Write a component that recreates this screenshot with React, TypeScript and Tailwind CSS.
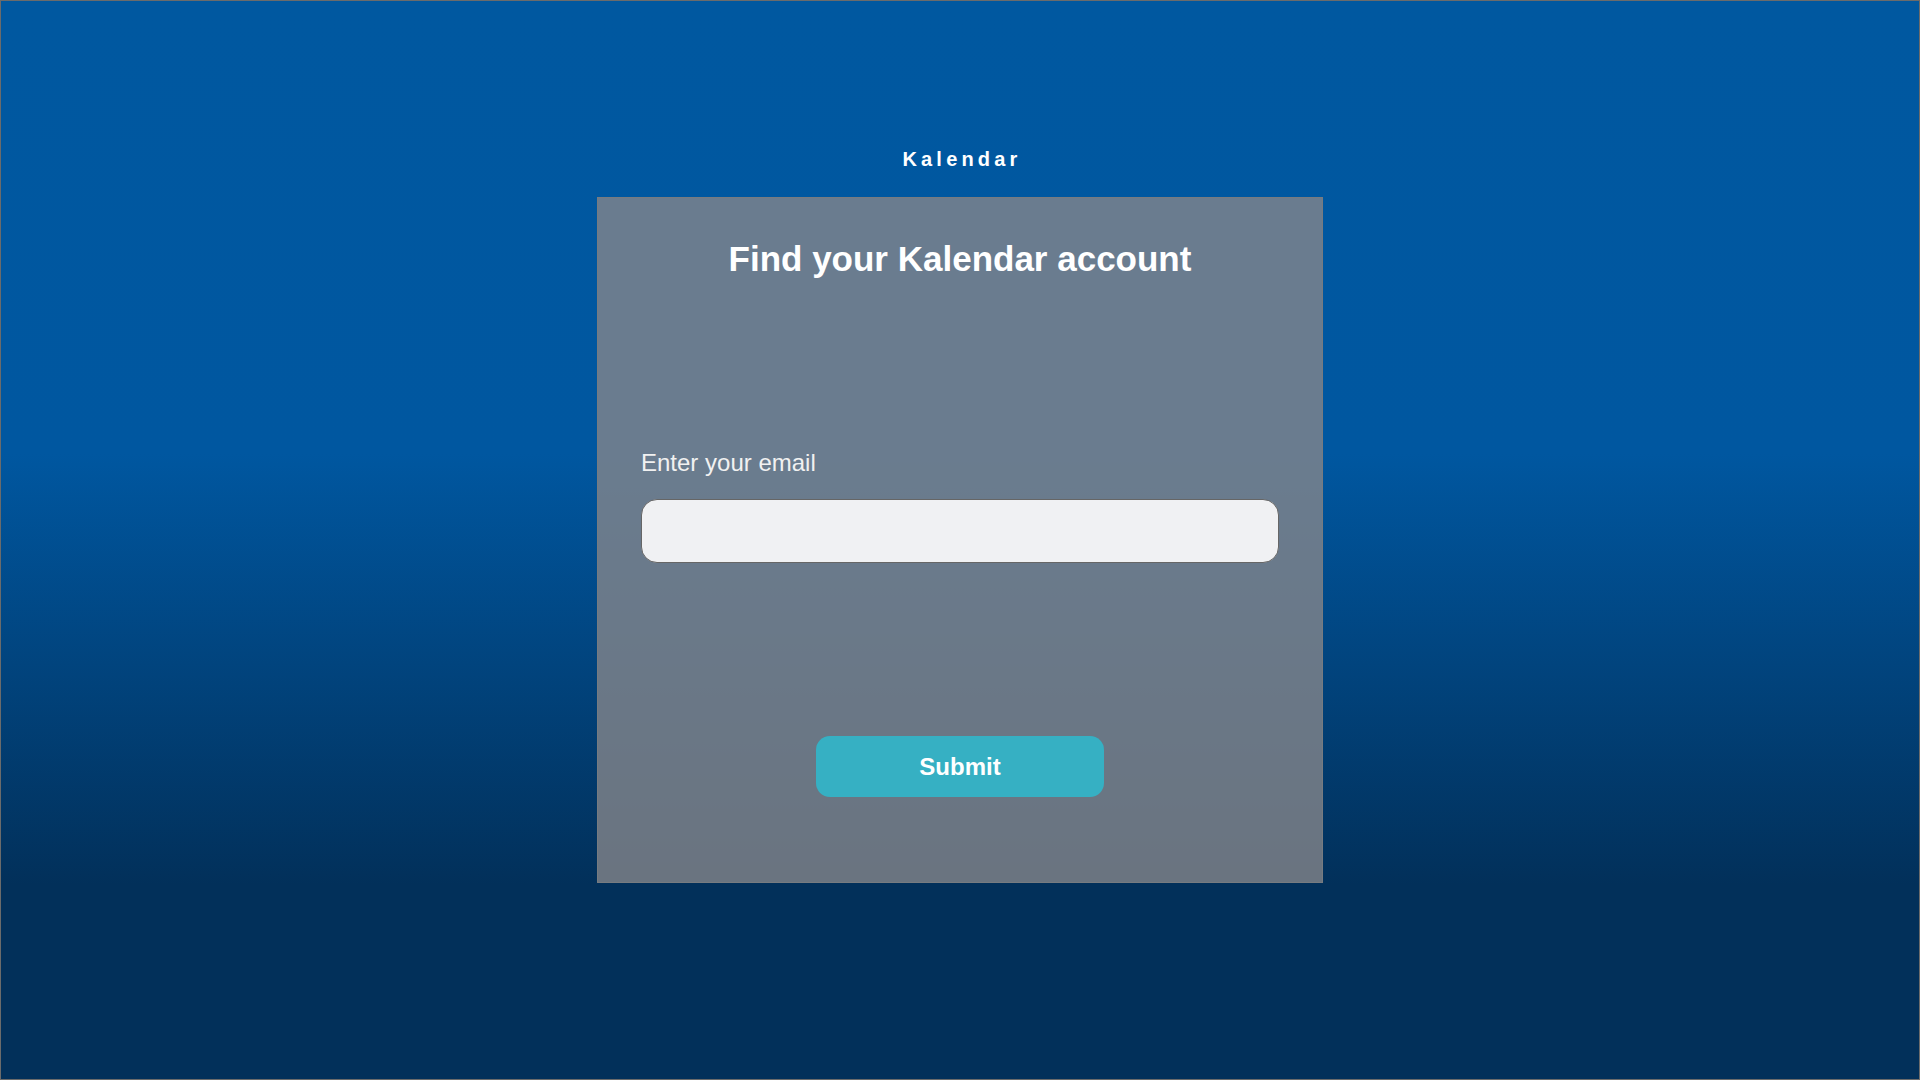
import React from "react";

export default function App() {
  return (
    <div
      className="box-border w-full h-[1080px] border border-[#6b6b6b] flex flex-col items-center bg-[linear-gradient(to_bottom,#0058a0_0%,#0057a0_42%,#02305a_82%,#02305a_100%)]"
      style={{ fontFamily: '"Liberation Sans", Arial, sans-serif' }}
    >
      <div className="mt-[144px] h-[28px] leading-[28px] text-[20px] font-bold text-white tracking-[4.2px] pl-[4px]">
        Kalendar
      </div>
      <div className="mt-[24px] box-border w-[726px] h-[686px] border border-[#777b80] bg-[rgba(134,134,138,0.79)] px-[43px] flex flex-col">
        <h1 className="mt-[41px] h-[40px] leading-[40px] text-center text-[35px] font-bold text-white">
          Find your Kalendar account
        </h1>
        <label className="mt-[170px] h-[28px] leading-[28px] text-[24px] text-[#f1f1f1]">
          Enter your email
        </label>
        <input
          type="email"
          className="mt-[22px] box-border h-[64px] w-full rounded-[16px] border border-[#666666] bg-[#f0f1f3] px-4 text-[20px] outline-none"
        />
        <div className="mt-[173px] flex justify-center">
          <button className="w-[288px] h-[61px] rounded-[14px] bg-[#36b0c3] text-white text-[24px] font-bold">
            Submit
          </button>
        </div>
      </div>
    </div>
  );
}
